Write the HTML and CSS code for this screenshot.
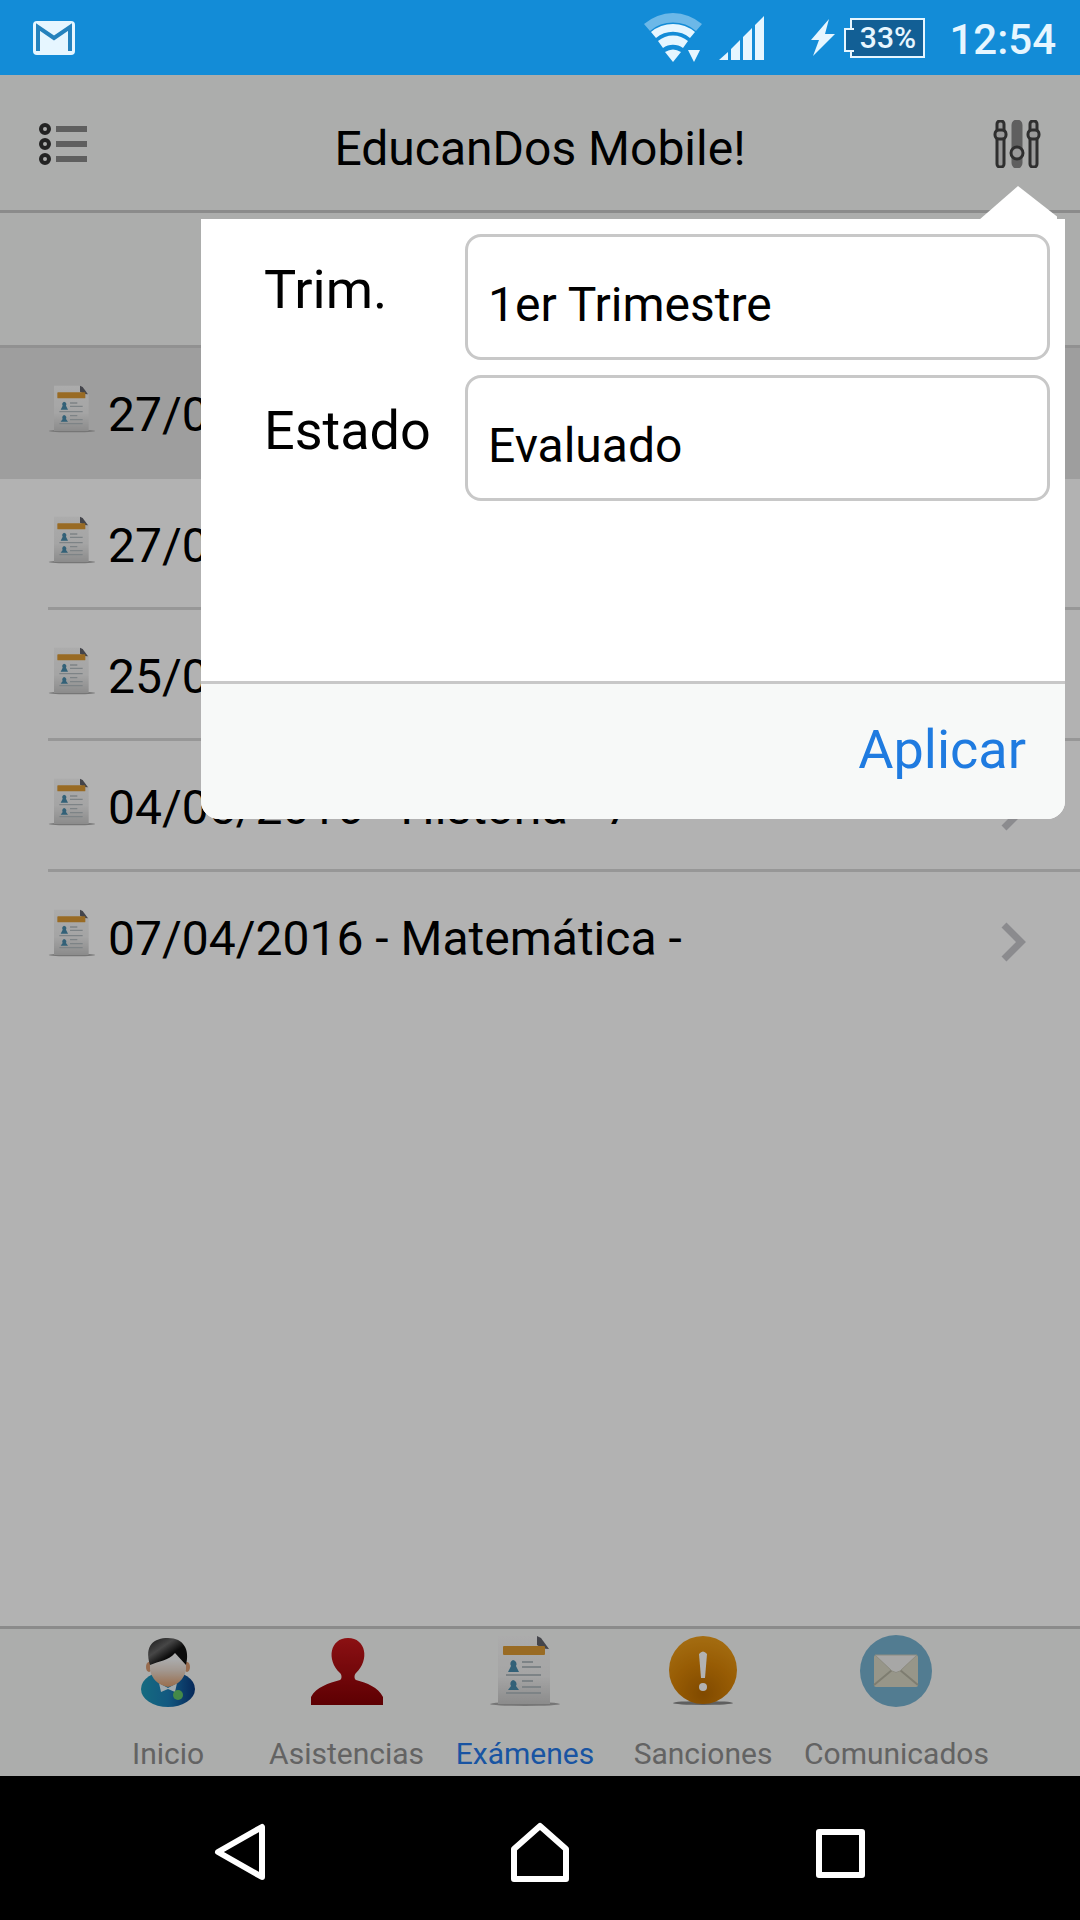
FILE: index.html
```html
<!DOCTYPE html>
<html lang="es">
<head>
  <meta charset="UTF-8">
  <meta name="viewport" content="width=device-width, initial-scale=1.0">
  <title>EducanDos Mobile!</title>
  <link rel="stylesheet" href="styles.css">
</head>
<body>

  <!-- Shared icons -->
  <svg class="defs" width="0" height="0" aria-hidden="true">
    <defs>
      <linearGradient id="paper" x1="0" y1="0" x2="0" y2="1">
        <stop offset="0" stop-color="#f6f6f6"/><stop offset=".6" stop-color="#ececec"/><stop offset="1" stop-color="#c8c8c8"/>
      </linearGradient>
      <linearGradient id="hair" x1="0" y1="0" x2="1" y2="1">
        <stop offset="0" stop-color="#222"/><stop offset=".35" stop-color="#666"/><stop offset=".6" stop-color="#111"/>
      </linearGradient>
      <linearGradient id="skin" x1="0" y1="0" x2="0" y2="1">
        <stop offset="0" stop-color="#f4f4f4"/><stop offset=".4" stop-color="#e8d8cc"/><stop offset="1" stop-color="#dc9c6c"/>
      </linearGradient>
      <linearGradient id="shirt" x1="0" y1="0" x2="1" y2="0">
        <stop offset="0" stop-color="#1f9ab8"/><stop offset=".5" stop-color="#1b7fb8"/><stop offset="1" stop-color="#0a3a80"/>
      </linearGradient>
      <linearGradient id="red" x1="0" y1="0" x2="0" y2="1">
        <stop offset="0" stop-color="#c8181c"/><stop offset="1" stop-color="#860004"/>
      </linearGradient>
      <radialGradient id="orange" cx=".5" cy=".85" r=".9">
        <stop offset="0" stop-color="#b86a00"/><stop offset=".5" stop-color="#d98406"/><stop offset="1" stop-color="#eea01c"/>
      </radialGradient>
      <symbol id="exam" viewBox="0 0 72 72">
        <ellipse cx="36" cy="69" rx="35" ry="2" fill="#aaa"/>
        <path d="M9 1h38l14 13v55H9z" fill="url(#paper)"/>
        <path d="M48 1l4 2 8 11q-7 0-12-4z" fill="#62636c"/>
        <rect x="14" y="11" width="42" height="9" rx="1" fill="#dc9a34"/>
        <path d="M24 25a4 4 0 0 1 3 6l3 6H19l3-6a4 4 0 0 1 2-6zM24 45a4 4 0 0 1 3 6l3 4H19l3-4a4 4 0 0 1 2-6z" fill="#4a8cac"/>
        <path d="M33 27h11M33 32h19M17 40h35M33 46h11M33 52h19M17 58h35" stroke="#b4bcc0" stroke-width="2"/>
      </symbol>
      <symbol id="chevron" viewBox="0 0 26 40">
        <path d="M3 3l17 17L3 37" fill="none" stroke="#c7c7cc" stroke-width="7"/>
      </symbol>
    </defs>
  </svg>

  <div class="status-bar">
    <svg width="44" height="36" viewBox="0 0 44 36">
      <rect x="1" y="1" width="42" height="34" rx="4" fill="#e6f6ff"/>
      <path d="M6 31V7l16 11L38 7v24" fill="none" stroke="#2582bd" stroke-width="4"/>
    </svg>
    <div class="status-icons">
      <svg class="wifi" width="60" height="50" viewBox="0 0 60 50">
        <path d="M1 11a44 44 0 0 1 58 0l-6 7a35 35 0 0 0-46 0z" fill="#6cb8e8"/>
        <path d="M8 19a34 34 0 0 1 44 0l-5 6a26 26 0 0 0-34 0zM15 28a23 23 0 0 1 30 0l-5 7a17 17 0 0 0-20 0zM22 39q8-5 16 0l-8 10zM45 37h12l-6 12z" fill="#e6f6ff"/>
      </svg>
      <svg class="signal" width="46" height="46" viewBox="0 0 46 46">
        <path d="M0 45l9-8v8zM12 34l9-9v20h-9zM24 22l9-9v32h-9zM36 10l9-9v44h-9z" fill="#e6f6ff"/>
      </svg>
      <svg class="bolt" width="24" height="38" viewBox="0 0 24 38">
        <path d="M18 0L0 21h8L2 37l22-22H14z" fill="#e6f6ff"/>
      </svg>
      <div class="battery">33%</div>
      <div class="clock">12:54</div>
    </div>
  </div>

  <div class="app">
    <header class="toolbar">
      <button class="icon-button" type="button" aria-label="Menú">
        <svg width="48" height="48" viewBox="0 0 48 48">
          <g fill="none" stroke="#333" stroke-width="4">
            <circle cx="6" cy="9" r="4"/><circle cx="6" cy="24" r="4"/><circle cx="6" cy="39" r="4"/>
          </g>
          <path d="M17 9h31M17 24h31M17 39h31" stroke="#888" stroke-width="6"/>
        </svg>
      </button>
      <h1>EducanDos Mobile!</h1>
      <button class="icon-button" type="button" aria-label="Filtros">
        <svg width="48" height="48" viewBox="0 0 48 48">
          <g fill="#ddd" stroke="#444" stroke-width="3">
            <rect x="4" y="1" width="7" height="46" rx="3"/><rect x="37" y="1" width="7" height="46" rx="3"/>
            <rect x="20" y="1" width="8" height="46" rx="4" fill="#888" stroke="#888"/>
            <rect x="2" y="10" width="11" height="9" rx="4"/><rect x="35" y="10" width="11" height="9" rx="4"/>
            <circle cx="24" cy="33" r="6"/>
          </g>
        </svg>
      </button>
    </header>
    <div class="sub-bar"></div>

    <ul class="exam-list">
      <li class="selected"><a href="#"><svg class="exam-icon"><use href="#exam"/></svg><span>27/06/2016 -</span><svg class="chevron"><use href="#chevron"/></svg></a></li>
      <li><a href="#"><svg class="exam-icon"><use href="#exam"/></svg><span>27/05/2016 -</span><svg class="chevron"><use href="#chevron"/></svg></a></li>
      <li><a href="#"><svg class="exam-icon"><use href="#exam"/></svg><span>25/05/2016 -</span><svg class="chevron"><use href="#chevron"/></svg></a></li>
      <li><a href="#"><svg class="exam-icon"><use href="#exam"/></svg><span>04/05/2016 - Historia - 7</span><svg class="chevron"><use href="#chevron"/></svg></a></li>
      <li><a href="#"><svg class="exam-icon"><use href="#exam"/></svg><span>07/04/2016 - Matemática -</span><svg class="chevron"><use href="#chevron"/></svg></a></li>
    </ul>

    <nav class="tab-bar">
      <a href="#">
        <svg viewBox="0 0 72 72">
          <ellipse cx="36" cy="54" rx="27" ry="18" fill="url(#shirt)"/>
          <path d="M27 48l9 5 9-5-2 9-7-3-7 3z" fill="#e8f4fa"/>
          <ellipse cx="17" cy="32" rx="3" ry="5" fill="#d99a70"/><ellipse cx="55" cy="32" rx="3" ry="5" fill="#d99a70"/>
          <path d="M18 25h36v10q-3 14-18 17-15-3-18-17z" fill="url(#skin)"/>
          <path d="M18 30C12 10 22 3 36 3c16 0 22 12 18 27l-11-12C36 26 27 26 18 30z" fill="url(#hair)"/>
          <circle cx="46" cy="60" r="5" fill="#62c468"/>
        </svg>
        <span>Inicio</span>
      </a>
      <a href="#">
        <svg viewBox="0 0 72 72">
          <path d="M0 70v-8c5-10 18-14 29-17 2-1 2-5 0-7C15 25 19 3 37 3s22 22 8 35c-2 2-2 6 0 7 11 3 22 7 27 17v8z" fill="url(#red)"/>
        </svg>
        <span>Asistencias</span>
      </a>
      <a href="#" class="active">
        <svg viewBox="0 0 72 72"><use href="#exam"/></svg>
        <span>Exámenes</span>
      </a>
      <a href="#">
        <svg viewBox="0 0 72 72">
          <ellipse cx="36" cy="68" rx="30" ry="2" fill="#888"/>
          <circle cx="36" cy="35" r="34" fill="url(#orange)"/>
          <path d="M32 19q4-5 8 0l-2 24h-4z" fill="#fff"/>
          <circle cx="36" cy="52" r="4" fill="#fff"/>
        </svg>
        <span>Sanciones</span>
      </a>
      <a href="#">
        <svg viewBox="0 0 72 72">
          <circle cx="36" cy="36" r="36" fill="#76b2d0"/>
          <rect x="14" y="20" width="44" height="32" rx="2" fill="#d8d7c4"/>
          <path d="M14 50l18-15M58 50L40 35" stroke="#b5b4a2" stroke-width="2"/>
          <path d="M15 20h42L40 36q-4 3-8 0z" fill="#f0f0ee" stroke="#c9c8b8"/>
        </svg>
        <span>Comunicados</span>
      </a>
    </nav>

    <div class="overlay"></div>

    <!-- Filter popover -->
    <form class="popover">
      <div class="fields">
        <label for="trim">Trim.</label>
        <select id="trim">
          <option>1er Trimestre</option>
        </select>
        <label for="estado">Estado</label>
        <select id="estado">
          <option>Evaluado</option>
        </select>
      </div>
      <div class="popover-footer">
        <button type="button">Aplicar</button>
      </div>
    </form>
  </div>

  <div class="nav-bar">
    <button type="button" aria-label="Atrás">
      <svg width="60" height="60" viewBox="0 0 60 60"><path d="M52 5v50L8 30z"/></svg>
    </button>
    <button type="button" aria-label="Inicio">
      <svg width="60" height="60" viewBox="0 0 60 60"><path d="M4 27L30 4l26 23v30H4z"/></svg>
    </button>
    <button type="button" aria-label="Recientes">
      <svg width="60" height="60" viewBox="0 0 60 60"><path d="M9 10h43v43H9z"/></svg>
    </button>
  </div>

</body>
</html>
```
FILE: styles.css
```css
* {
  margin: 0;
  padding: 0;
  box-sizing: border-box;
}
body {
  display: flex;
  flex-direction: column;
  min-height: 100vh;
  font-family: Roboto, sans-serif;
  font-size: 48px;
  color: #000;
  background: #000;
}
button {
  border: none;
  background: none;
  font: inherit;
}
a {
  color: inherit;
  text-decoration: none;
}
svg {
  display: block;
  flex: none;
}
.defs {
  position: absolute;
}

/* Status bar */
.status-bar {
  display: flex;
  justify-content: space-between;
  align-items: center;
  height: 75px;
  padding: 0 24px 0 32px;
  background: #138cd7;
  color: #e6f6ff;
}
.status-icons {
  display: flex;
  align-items: center;
}
.signal {
  margin-left: 16px;
}
.bolt {
  margin-left: 46px;
}
.battery {
  position: relative;
  margin-left: 15px;
  width: 75px;
  height: 40px;
  border: 2px solid #e6f6ff;
  background: #125f95;
  font-size: 30px;
  font-weight: 500;
  line-height: 36px;
  text-align: center;
}
.battery::before {
  content: "";
  position: absolute;
  left: -8px;
  top: 8px;
  width: 8px;
  height: 20px;
  border: 2px solid #e6f6ff;
  border-right: none;
  background: #125f95;
}
.clock {
  margin-left: 24px;
  padding-top: 4px;
  font-size: 42px;
  font-weight: 500;
}

/* App */
.app {
  position: relative;
  flex: 1;
  display: flex;
  flex-direction: column;
  background: #fff;
}
.toolbar {
  display: flex;
  justify-content: space-between;
  align-items: center;
  height: 138px;
  padding: 3px 39px 0;
  background: #f7f8f7;
  border-bottom: 3px solid #c8c8c8;
}
.toolbar h1 {
  padding-top: 8px;
  font-size: 48px;
  font-weight: 400;
}
.sub-bar {
  height: 135px;
  background: #f7f8f7;
  border-bottom: 3px solid #d0d0d0;
}
.exam-list {
  flex: 1;
  list-style: none;
}
.exam-list a {
  display: flex;
  align-items: center;
  height: 131px;
  margin-left: 48px;
  padding-right: 53px;
  border-bottom: 3px solid #d8d8d8;
}
.exam-list .selected {
  background: #e3e3e3;
}
.exam-list .selected a,
.exam-list li:last-child a {
  border-color: transparent;
}
.exam-list span {
  flex: 1;
  padding: 5px 0 0 12px;
}
.exam-icon {
  width: 48px;
  height: 48px;
  margin-bottom: 7px;
}
.chevron {
  width: 26px;
  height: 40px;
  margin-top: 12px;
}

/* Tab bar */
.tab-bar {
  display: flex;
  justify-content: center;
  gap: 24px;
  height: 150px;
  padding-top: 6px;
  background: #f7f8f7;
  border-top: 3px solid #c8c8c8;
  font-size: 30px;
  color: #8e8e8e;
}
.tab-bar a {
  display: flex;
  flex-direction: column;
  align-items: center;
  gap: 29px;
  min-width: 154px;
}
.tab-bar svg {
  width: 72px;
  height: 72px;
}
.tab-bar .active {
  color: #2479e8;
}

.overlay {
  position: absolute;
  inset: 0;
  background: rgba(0, 0, 0, 0.3);
}

/* Popover */
.popover {
  position: absolute;
  top: 144px;
  right: 15px;
  width: 80%;
  background: #fff;
  border-radius: 0 0 18px 18px;
  font-size: 54px;
}
.popover::before {
  content: "";
  position: absolute;
  top: -33px;
  right: 8px;
  width: 78px;
  height: 34px;
  background: #fff;
  clip-path: polygon(0 100%, 50% 0, 100% 90%, 100% 100%);
}
.fields {
  display: grid;
  grid-template-columns: 201px 1fr;
  align-content: start;
  row-gap: 15px;
  min-height: 462px;
  padding: 15px 15px 15px 63px;
}
.fields label {
  padding-top: 24px;
}
.fields select {
  appearance: none;
  height: 126px;
  padding: 15px 20px 0;
  border: 3px solid #c8c8c8;
  border-radius: 16px;
  background: #fff;
  color: #000;
  font: inherit;
  font-size: 48px;
}
.popover-footer {
  display: flex;
  justify-content: flex-end;
  align-items: center;
  height: 138px;
  padding: 0 39px 4px;
  border-top: 3px solid #c8c8c8;
  border-radius: 0 0 18px 18px;
  background: #f7f9f8;
}
.popover-footer button {
  color: #1f7be0;
}

/* System navigation */
.nav-bar {
  display: flex;
  justify-content: center;
  align-items: center;
  gap: 240px;
  height: 144px;
  padding-top: 8px;
  background: #000;
}
.nav-bar svg {
  fill: none;
  stroke: #fff;
  stroke-width: 6;
  stroke-linejoin: round;
}
```
